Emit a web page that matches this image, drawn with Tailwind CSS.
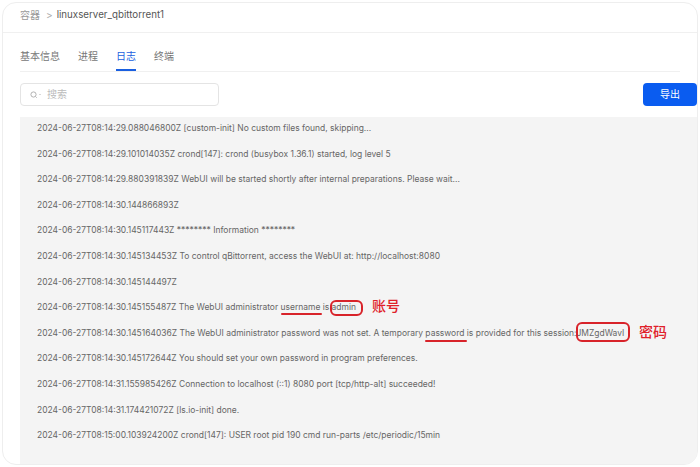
<!DOCTYPE html>
<html lang="zh">
<head>
  <meta charset="UTF-8" />
  <title>容器日志</title>
  <script src="https://cdn.jsdelivr.net/npm/@tailwindcss/browser@4"></script>
</head>
<body class="bg-white overflow-hidden font-['Inter','Noto_Sans_CJK_SC',sans-serif]">
  <div class="relative w-[700px] h-[467px] overflow-hidden">
    <div class="w-[696px] h-[463px] ml-[2px] mt-[2px] border border-[#eeeeee] rounded-[14px] flex flex-col">
      <!-- breadcrumb -->
      <div class="h-[30px] shrink-0 border-b border-[#f0f0f0] flex items-center pl-[17px] pb-[5px] text-[10px] text-[#555]">
        <span class="text-[#999]">容器</span>
        <span class="text-[#aaa] ml-[6px] mr-[4px]">&gt;</span>
        <span class="text-[9.75px]">linuxserver_qbittorrent1</span>
      </div>

      <!-- tabs -->
      <div class="h-[39px] shrink-0 mx-[17px] border-b border-[#f0f0f0] flex gap-[18px] text-[10px] text-[#777]">
        <a class="h-full flex items-center pt-[10px] border-b-2 border-transparent">基本信息</a>
        <a class="h-full flex items-center pt-[10px] border-b-2 border-transparent">进程</a>
        <a class="h-full flex items-center pt-[10px] text-[#1a5fe0] border-b-2 border-[#1a5fe0]">日志</a>
        <a class="h-full flex items-center pt-[10px] border-b-2 border-transparent">终端</a>
      </div>

      <!-- search and export -->
      <div class="h-[45px] shrink-0 flex items-center justify-between pl-[17px]">
        <div class="w-[199px] h-[23px] border border-[#e4e4e4] rounded-[4px] flex items-center pl-[9px] gap-[6px] text-[10px] text-[#bbb]">
          <svg width="11" height="8" viewBox="0 0 11 8" fill="none" stroke="#aaa" stroke-width="0.9">
            <circle cx="3.5" cy="3.5" r="2.6" />
            <path d="M5.5 5.5l1.2 1.2" />
            <circle cx="10" cy="3.5" r="0.6" fill="#aaa" stroke="none" />
          </svg>
          <span>搜索</span>
        </div>
        <button class="w-[54px] h-[23px] bg-[#0a5cf0] rounded-[4px] text-white text-[10px]">导出</button>
      </div>

      <!-- log output -->
      <div class="flex-1 ml-[17px] bg-[#f4f4f4] pl-[17px] text-[8.48px] text-[#666] leading-[25.6px] overflow-hidden rounded-br-[12px]">
        <div class="-mt-[1px]">
          <p>2024-06-27T08:14:29.088046800Z [custom-init] No custom files found, skipping...</p>
          <p>2024-06-27T08:14:29.101014035Z crond[147]: crond (busybox 1.36.1) started, log level 5</p>
          <p>2024-06-27T08:14:29.880391839Z WebUI will be started shortly after internal preparations. Please wait...</p>
          <p>2024-06-27T08:14:30.144866893Z</p>
          <p>2024-06-27T08:14:30.145117443Z ******** Information ********</p>
          <p>2024-06-27T08:14:30.145134453Z To control qBittorrent, access the WebUI at: http://localhost:8080</p>
          <p>2024-06-27T08:14:30.145144497Z</p>
          <p>2024-06-27T08:14:30.145155487Z The WebUI administrator username is admin</p>
          <p>2024-06-27T08:14:30.145164036Z The WebUI administrator password was not set. A temporary password is provided for this session:JMZgdWavI</p>
          <p>2024-06-27T08:14:30.145172644Z You should set your own password in program preferences.</p>
          <p>2024-06-27T08:14:31.155985426Z Connection to localhost (::1) 8080 port [tcp/http-alt] succeeded!</p>
          <p>2024-06-27T08:14:31.174421072Z [ls.io-init] done.</p>
          <p>2024-06-27T08:15:00.103924200Z crond[147]: USER root pid 190 cmd run-parts /etc/periodic/15min</p>
        </div>
      </div>
    </div>

    <!-- red annotations over the log -->
    <div class="absolute left-[281px] top-[313px] w-[41px] h-[2px] bg-[#d8232a] rounded-full"></div>
    <div class="absolute left-[330px] top-[300px] w-[33px] h-[16px] border-2 border-[#d8232a] rounded-[6px]"></div>
    <div class="absolute left-[372px] top-[297px] text-[14px] leading-[18px] font-medium text-[#e0202a]">账号</div>
    <div class="absolute left-[425px] top-[340px] w-[42px] h-[2px] bg-[#d8232a] rounded-full"></div>
    <div class="absolute left-[576px] top-[322px] w-[54px] h-[20px] border-2 border-[#d8232a] rounded-[6px]"></div>
    <div class="absolute left-[639px] top-[323px] text-[14px] leading-[18px] font-medium text-[#e0202a]">密码</div>
  </div>
</body>
</html>
